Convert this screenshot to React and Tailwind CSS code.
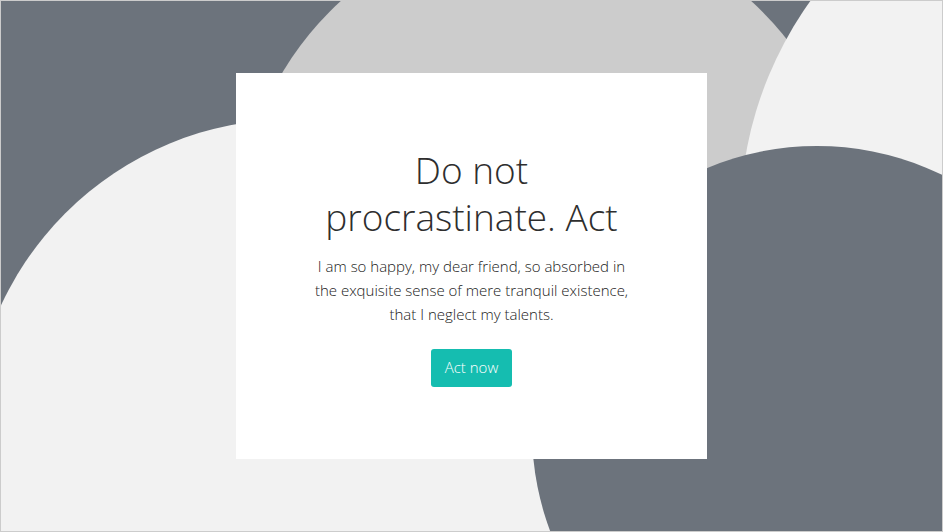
export default function App() {
  return (
    <div
      className="relative box-border flex h-[532px] w-[943px] items-center justify-center overflow-hidden border border-[#cccccc] bg-[#6c737c]"
      style={{ fontFamily: '"Open Sans", "Noto Sans", sans-serif' }}
    >
      {/* background blobs */}
      <div className="absolute left-[239px] top-[-79px] h-[612px] w-[612px] rounded-full bg-[#cccccc]"></div>
      <div className="absolute left-[739px] top-[-157px] h-[752px] w-[752px] rounded-full bg-[#f2f2f2]"></div>
      <div className="absolute left-[-30px] top-[118px] h-[644px] w-[644px] rounded-full bg-[#f2f2f2]"></div>
      <div className="absolute left-[531px] top-[145px] h-[570px] w-[570px] rounded-full bg-[#6c737c]"></div>

      {/* card */}
      <div className="relative z-10 flex h-[386px] w-[471px] flex-col items-center justify-center bg-white text-center">
        <h1 className="whitespace-nowrap text-[37px] font-light leading-[47px] text-[#2e2e2e]">
          Do not
          <br />
          procrastinate. Act
        </h1>
        <p className="mt-[14px] whitespace-nowrap text-[15px] font-light leading-[24px] text-[#222222]">
          I am so happy, my dear friend, so absorbed in
          <br />
          the exquisite sense of mere tranquil existence,
          <br />
          that I neglect my talents.
        </p>
        <button className="mt-[23px] h-[38px] rounded-[3px] bg-[#15bdb0] px-[14px] text-[15px] font-light text-white">
          Act now
        </button>
      </div>
    </div>
  );
}
